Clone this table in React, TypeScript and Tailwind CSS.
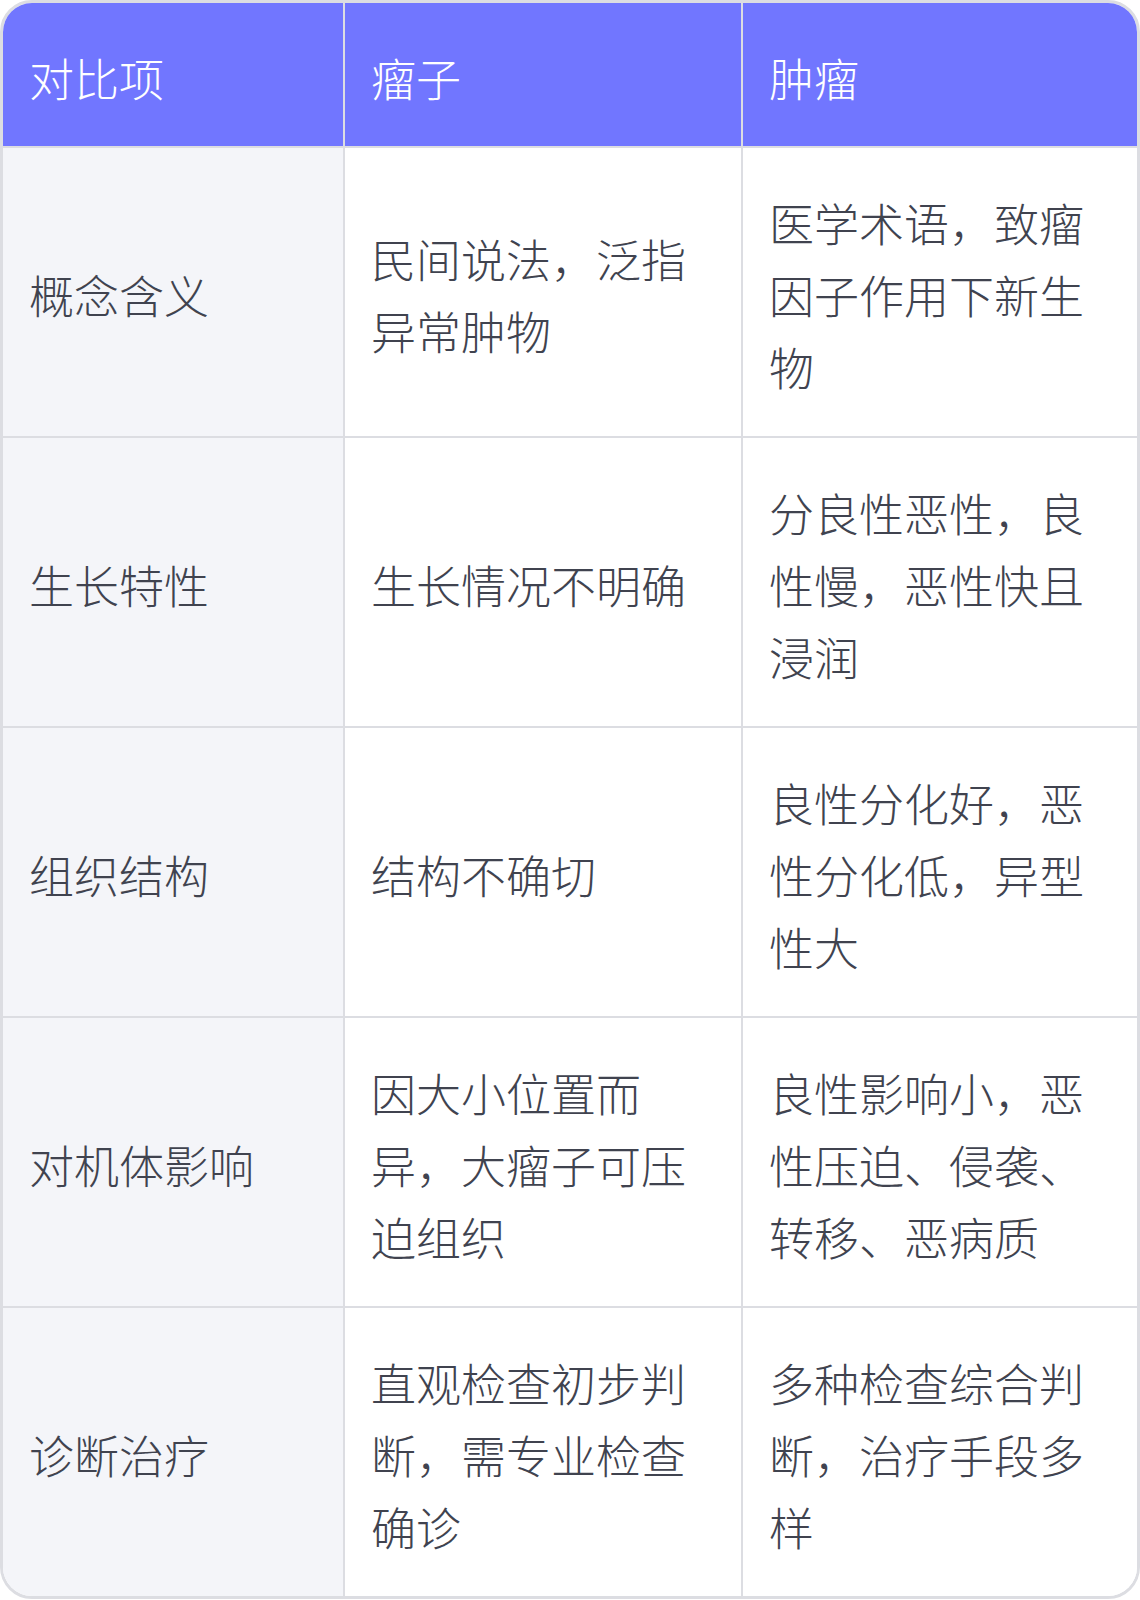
const rows: { label: string; a: string; b: string }[] = [
  { label: '概念含义', a: '民间说法，泛指异常肿物', b: '医学术语，致瘤因子作用下新生物' },
  { label: '生长特性', a: '生长情况不明确', b: '分良性恶性，良性慢，恶性快且浸润' },
  { label: '组织结构', a: '结构不确切', b: '良性分化好，恶性分化低，异型性大' },
  { label: '对机体影响', a: '因大小位置而异，大瘤子可压迫组织', b: '良性影响小，恶性压迫、侵袭、转移、恶病质' },
  { label: '诊断治疗', a: '直观检查初步判断，需专业检查确诊', b: '多种检查综合判断，治疗手段多样' },
];

export default function App() {
  return (
    <div className="w-[1140px] bg-white font-['Noto_Sans_CJK_SC','Noto_Sans',sans-serif] font-light text-[45px] leading-[72px]">
      <div className="border-[3px] border-[#dcdde2] rounded-[32px] overflow-hidden">
        <div className="grid grid-cols-[342px_398px_394px]">
          {/* header */}
          <div className="bg-[#7176ff] text-white pl-[26px] pr-[28px] pt-[39px] pb-[32px] border-r-2 border-b-2 border-[#dcdde2]">对比项</div>
          <div className="bg-[#7176ff] text-white pl-[26px] pr-[28px] pt-[39px] pb-[32px] border-r-2 border-b-2 border-[#dcdde2]">瘤子</div>
          <div className="bg-[#7176ff] text-white pl-[26px] pr-[28px] pt-[39px] pb-[32px] border-b-2 border-[#dcdde2]">肿瘤</div>

          {rows.map((r, i) => {
            const last = i === rows.length - 1;
            return (
              <div key={r.label} className="contents">
                <div className={`bg-[#f4f5f9] text-[#40434f] pl-[26px] pr-[28px] pt-[39px] pb-[33px] border-r-2 border-[#dcdde2] flex items-center ${last ? '' : 'border-b-2'}`}>
                  {r.label}
                </div>
                <div className={`bg-white text-[#40434f] pl-[26px] pr-[28px] pt-[39px] pb-[33px] border-r-2 border-[#dcdde2] flex items-center ${last ? '' : 'border-b-2'}`}>
                  <span>{r.a}</span>
                </div>
                <div className={`bg-white text-[#40434f] pl-[26px] pr-[28px] pt-[39px] pb-[33px] border-[#dcdde2] flex items-center ${last ? '' : 'border-b-2'}`}>
                  <span>{r.b}</span>
                </div>
              </div>
            );
          })}
        </div>
      </div>
    </div>
  );
}
